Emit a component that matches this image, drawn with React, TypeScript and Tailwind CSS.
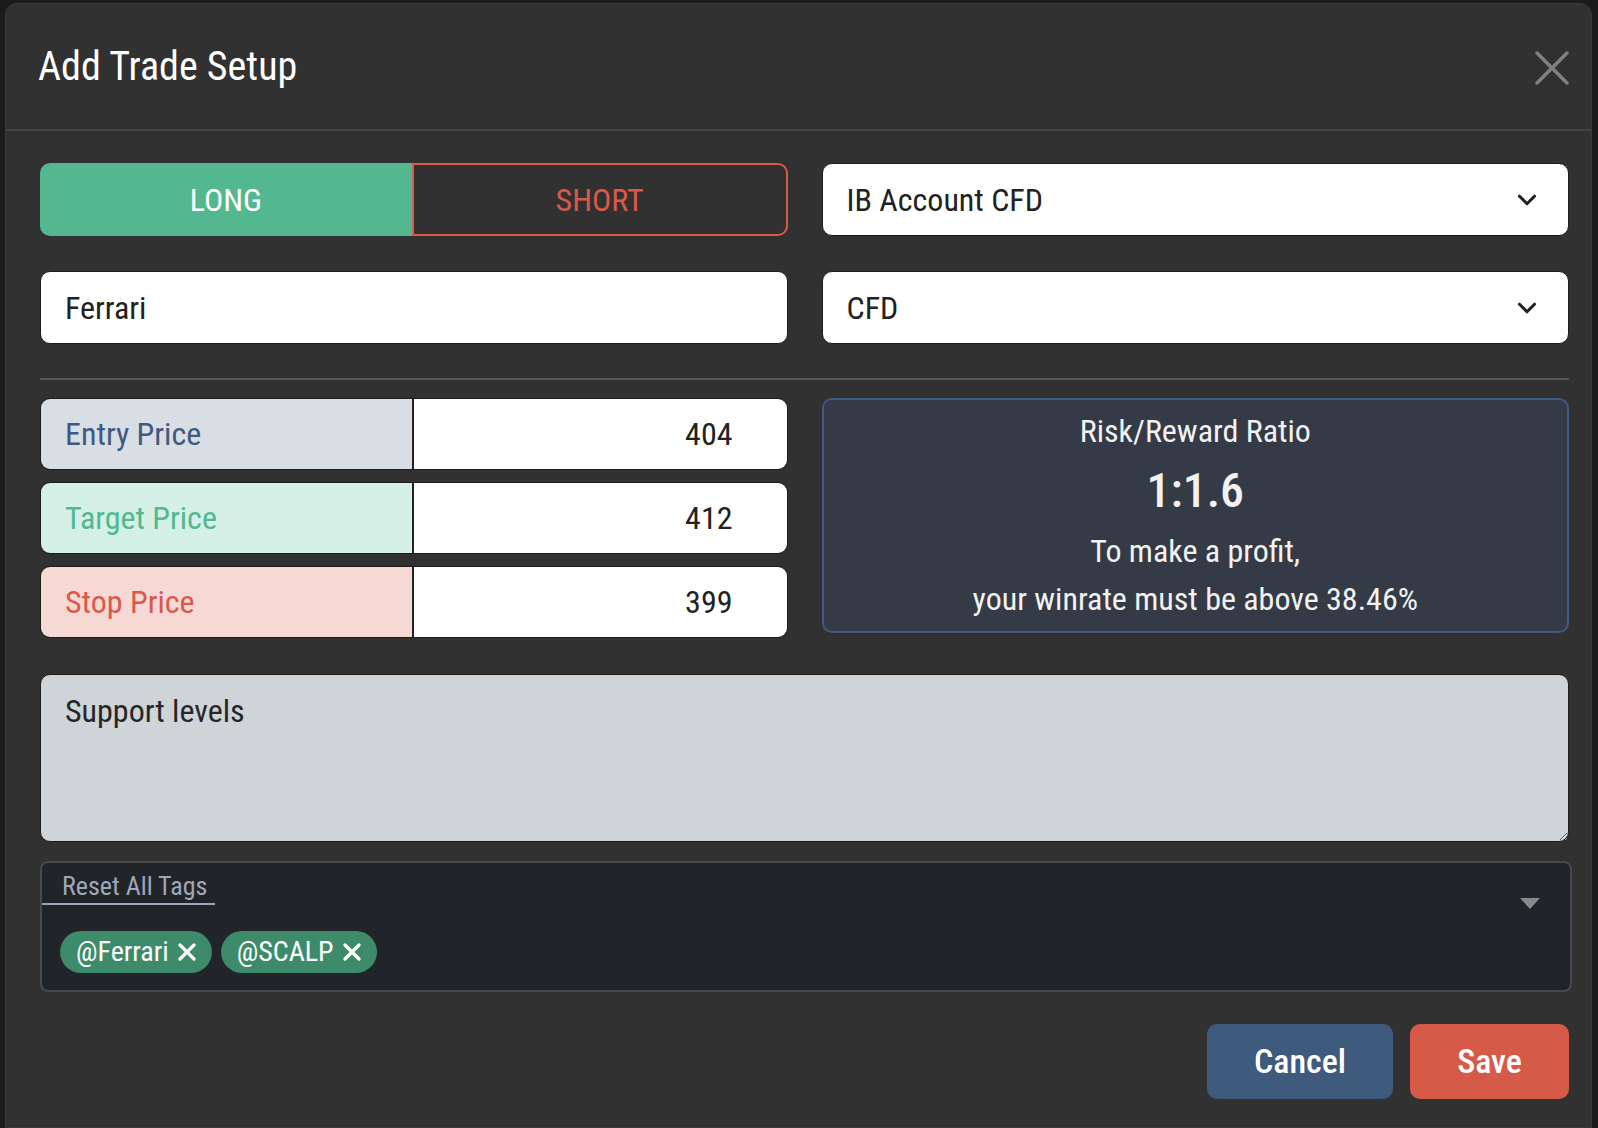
import { ChevronDown } from 'lucide-react';

const priceRows = [
  { label: 'Entry Price', value: '404', labelBg: 'bg-[#d9dee5]', labelText: 'text-[#3e5a80]' },
  { label: 'Target Price', value: '412', labelBg: 'bg-[#d4f0e7]', labelText: 'text-[#52b88e]' },
  { label: 'Stop Price', value: '399', labelBg: 'bg-[#f6d9d5]', labelText: 'text-[#d9594b]' },
];

const tags = ['@Ferrari', '@SCALP'];

function SelectBox({ value }: { value: string }) {
  return (
    <div className="flex h-[73px] items-center justify-between rounded-[10px] border border-[#1c1c1c] bg-white pl-[24px] pr-[26px] text-[32px] text-[#222]">
      <span>{value}</span>
      <ChevronDown size={30} strokeWidth={2.5} className="text-[#222]" />
    </div>
  );
}

export default function App() {
  return (
    <div className="flex h-[1128px] w-[1598px] flex-col overflow-hidden bg-[#1b1b1b] pl-[5px] pr-[6px] pt-[3px] font-['Roboto_Condensed',Roboto,sans-serif]">
      <div className="flex-1 rounded-t-[12px] border border-[#3a3a3a] bg-[#313131]">
        {/* header */}
        <div className="flex h-[127px] items-center justify-between border-b-2 border-[#454545] pl-[32px] pr-[22px]">
          <h2 className="text-[40px] font-normal text-white">Add Trade Setup</h2>
          <svg width="34" height="34" viewBox="0 0 34 34" className="mt-[2px]">
            <line x1="2" y1="2" x2="32" y2="32" stroke="#808080" strokeWidth="3.5" strokeLinecap="round" />
            <line x1="32" y1="2" x2="2" y2="32" stroke="#808080" strokeWidth="3.5" strokeLinecap="round" />
          </svg>
        </div>

        {/* body */}
        <div className="pl-[34px] pr-[22px] pt-[32px]">
          <div className="grid grid-cols-2 gap-x-[34px] gap-y-[35px]">
            <div className="flex h-[73px] text-[32px]">
              <button className="flex-1 rounded-l-[10px] bg-[#53b88f] text-white">LONG</button>
              <button className="flex-1 rounded-r-[10px] border-2 border-[#d9594b] text-[#d9594b]">SHORT</button>
            </div>
            <SelectBox value="IB Account CFD" />
            <input
              defaultValue="Ferrari"
              className="h-[73px] rounded-[10px] border border-[#1c1c1c] bg-white px-[24px] text-[32px] text-[#222] outline-none"
            />
            <SelectBox value="CFD" />
          </div>

          <div className="mt-[34px] h-[2px] bg-[#555]" />

          <div className="mt-[18px] grid grid-cols-2 items-start gap-x-[34px]">
            <div className="flex flex-col gap-[12px]">
              {priceRows.map((row) => (
                <div key={row.label} className="grid h-[72px] grid-cols-2 overflow-hidden rounded-[10px] border border-[#1c1c1c] text-[32px]">
                  <div className={`flex items-center border-r-2 border-[#222] pl-[24px] ${row.labelBg} ${row.labelText}`}>
                    {row.label}
                  </div>
                  <input
                    defaultValue={row.value}
                    className="w-full min-w-0 bg-white pr-[54px] text-right text-[#222] outline-none"
                  />
                </div>
              ))}
            </div>
            <div className="flex h-[235px] flex-col items-center rounded-[10px] border-2 border-[#3e5b80] bg-[#353b46] py-[7px] text-[32px] leading-[48px] text-[#f2f2f2]">
              <div>Risk/Reward Ratio</div>
              <div className="text-[48px] font-medium leading-[72px]">1:1.6</div>
              <div>To make a profit,</div>
              <div>your winrate must be above 38.46%</div>
            </div>
          </div>

          <textarea
            defaultValue="Support levels"
            className="mt-[36px] block h-[168px] w-full rounded-[10px] border border-[#1c1c1c] bg-[#cfd4d8] px-[24px] py-[12px] text-[32px] leading-[48px] text-[#262626] outline-none"
          />

          <div className="-mr-[3px] mt-[19px] h-[131px] rounded-[8px] border-2 border-[#454950] bg-[#212429]">
            <div className="flex items-start justify-between pr-[30px]">
              <div className="mt-[7px] border-b-2 border-[#9aa5b8] pl-[20px] pr-[8px] text-[26px] leading-[33px] text-[#9ea8b8]">
                Reset All Tags
              </div>
              <svg width="20" height="11" viewBox="0 0 20 11" className="mt-[35px]">
                <polygon points="0,0 20,0 10,11" fill="#8a8a8a" />
              </svg>
            </div>
            <div className="mt-[22px] flex gap-[9px] pl-[18px]">
              {tags.map((tag) => (
                <span
                  key={tag}
                  className="flex h-[42px] items-center gap-[9px] rounded-full bg-[#3d8b6b] pl-[16px] pr-[16px] text-[28px] text-white"
                >
                  {tag}
                  <svg width="18" height="18" viewBox="0 0 18 18">
                    <line x1="2" y1="2" x2="16" y2="16" stroke="white" strokeWidth="3.2" strokeLinecap="round" />
                    <line x1="16" y1="2" x2="2" y2="16" stroke="white" strokeWidth="3.2" strokeLinecap="round" />
                  </svg>
                </span>
              ))}
            </div>
          </div>

          <div className="mt-[32px] flex justify-end gap-[17px]">
            <button className="h-[75px] w-[186px] rounded-[10px] bg-[#3e5a7d] text-[34px] font-medium text-white">Cancel</button>
            <button className="h-[75px] w-[159px] rounded-[10px] bg-[#d65a48] text-[34px] font-medium text-white">Save</button>
          </div>
        </div>
      </div>
    </div>
  );
}
